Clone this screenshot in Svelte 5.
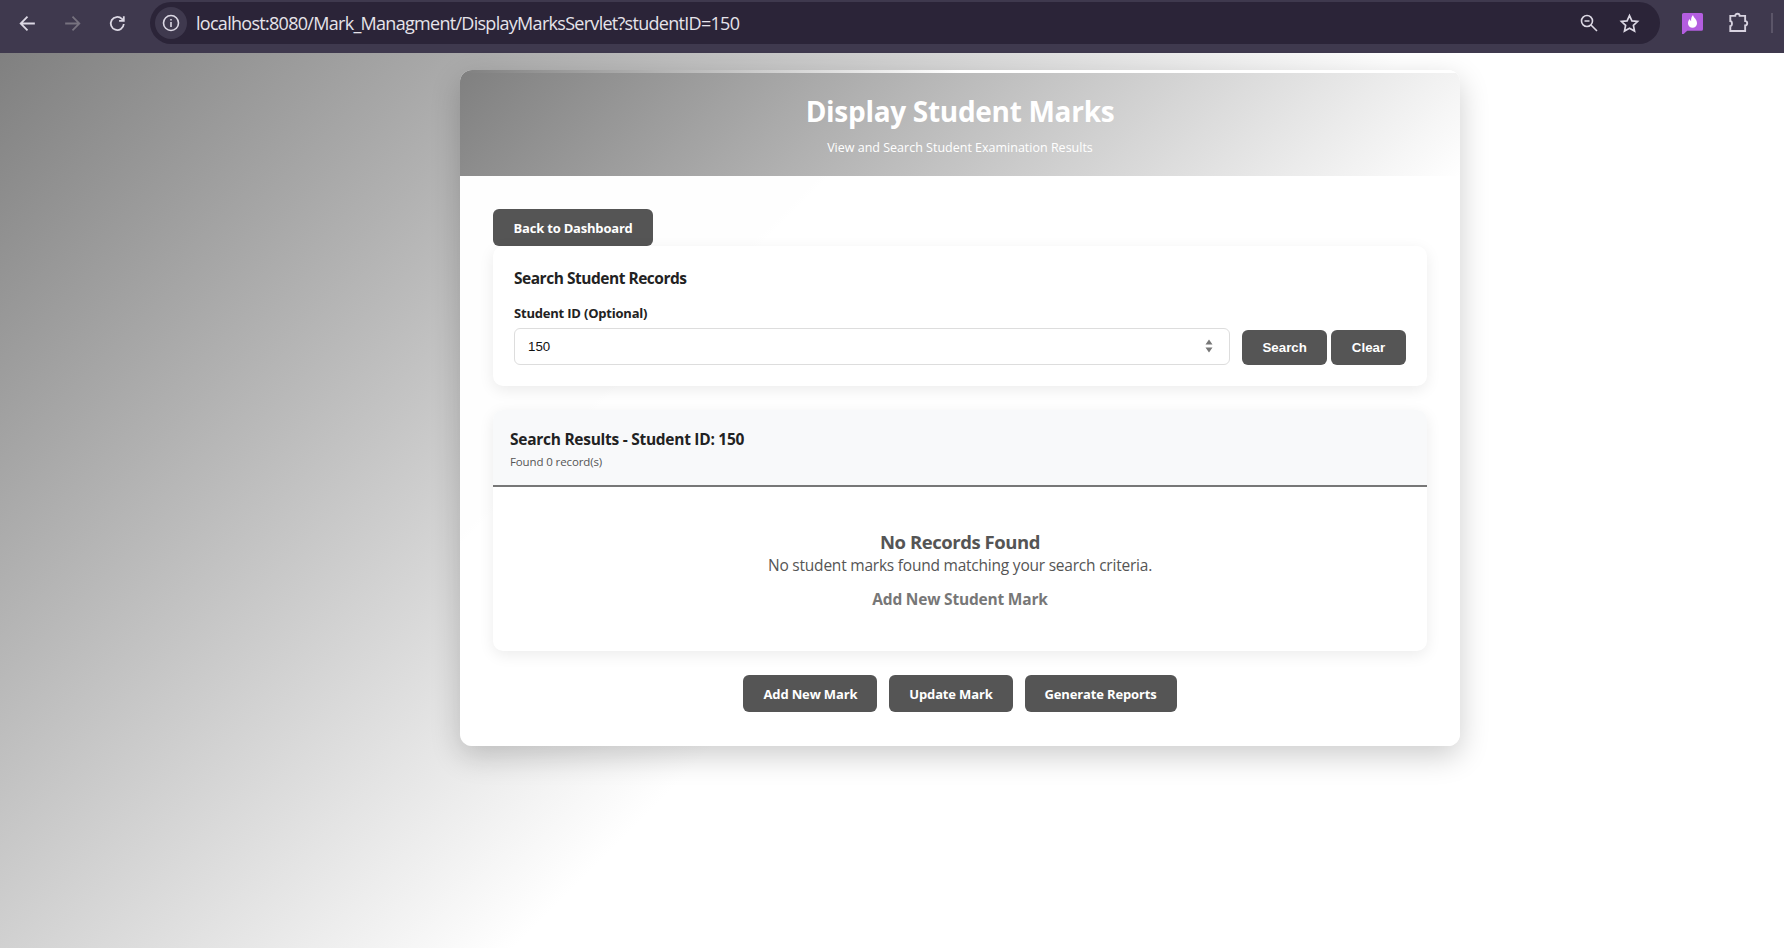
<script lang="ts">
	const actions = ['Add New Mark', 'Update Mark', 'Generate Reports'];
	let studentId = $state('150');
</script>

<div class="shell">
	<header class="toolbar">
		<div class="nav">
			<svg class="nav-icon" viewBox="0 0 20 20"><path d="M17 10H4M10 3.5 3.5 10l6.5 6.5" /></svg>
			<svg class="nav-icon dim" viewBox="0 0 20 20"><path d="M3 10h13M10 3.5l6.5 6.5-6.5 6.500" /></svg>
			<svg class="nav-icon" viewBox="0 0 20 20"><path d="M16 10.500A6.200 6.200 0 1 1 14.200 5.600L16 7.400M16 3v4.500h-4.500" /></svg>
		</div>
		<div class="omnibox">
			<span class="chip">
				<svg viewBox="0 0 20 20" width="20" height="20"><circle cx="10" cy="10" r="7.500" /><path d="M10 9v5M10 6v1.600" /></svg>
			</span>
			<span class="url">localhost:8080/Mark_Managment/DisplayMarksServlet?studentID=150</span>
			<span class="omni-right">
				<svg viewBox="0 0 20 20" width="20" height="20"><circle cx="8" cy="8" r="5.500" /><path d="M5.500 8h5M12 12l6 6" /></svg>
				<svg viewBox="0 0 20 20" width="21" height="21"><path d="m10 2.500 2.300 5 5.400.6-4 3.700 1.100 5.400L10 14.500l-4.800 2.700 1.100-5.400-4-3.700 5.400-.6z" /></svg>
			</span>
		</div>
		<div class="ext">
			<svg viewBox="0 0 20 20" width="21" height="21"><path class="flame-box" d="M1.500 0h17A1.500 1.500 0 0 1 20 1.500v14a1.500 1.500 0 0 1-1.500 1.500H5l-4 3.500H0V1.500A1.500 1.500 0 0 1 1.500 0z" /><path class="flame" d="M10.500 2c.3 2.500 3.800 4 3.800 7.800a4.300 4.300 0 0 1-8.600 0c0-1.800.8-3.100 1.800-4 .1 1.100.6 1.700 1.200 2-.3-2 .4-4.300 1.800-5.800z" /></svg>
			<svg viewBox="0 0 20 20" width="22" height="22"><path d="M7.500 3.500c0-2.500 4-2.500 4 0h5v4.800c2.500 0 2.500 4 0 4v5H3v-4.500c2 0 2-4.500 0-4.500V3.500z" /></svg>
			<span class="divider"></span>
		</div>
	</header>

	<main class="page">
		<div class="card">
			<div class="card-head">
				<h1>Display Student Marks</h1>
				<p>View and Search Student Examination Results</p>
			</div>
			<div class="card-body">
				<button class="btn back">Back to Dashboard</button>

				<section class="search">
					<h3>Search Student Records</h3>
					<label for="sid">Student ID (Optional)</label>
					<div class="search-row">
						<div class="field">
							<input id="sid" type="number" bind:value={studentId} />
							<svg class="spin" viewBox="0 0 8 14" width="8" height="14"><path d="M4 0.500 7.500 5.500h-7zM4 13.500 0.500 8.500h7z" /></svg>
						</div>
						<button class="btn form-btn search-btn">Search</button>
						<button class="btn form-btn">Clear</button>
					</div>
				</section>

				<section class="results">
					<div class="results-head">
						<h3>Search Results - Student ID: 150</h3>
						<small>Found 0 record(s)</small>
					</div>
					<div class="empty">
						<h4>No Records Found</h4>
						<p>No student marks found matching your search criteria.</p>
						<a href="#add">Add New Student Mark</a>
					</div>
				</section>

				<div class="actions">
					{#each actions as action (action)}
						<button class="btn">{action}</button>
					{/each}
				</div>
			</div>
		</div>
	</main>
</div>

<style>
	:global(body) {
		overflow: hidden;
		background: #fff;
	}

	.shell {
		width: 1784px;
		height: 948px;
		overflow: hidden;
		font-family: "Open Sans", "Noto Sans", sans-serif;
	}

	.toolbar {
		height: 53px;
		box-sizing: border-box;
		display: flex;
		align-items: center;
		background: #3f394e;
		padding: 0 0 7px 17px;
	}

	.nav {
		display: flex;
		gap: 24px;
		width: 133px;
		flex-shrink: 0;
		padding-top: 1px;
	}

	.nav-icon {
		width: 21px;
		height: 21px;
		fill: none;
		stroke: #dcd8e4;
		stroke-width: 1.7;
	}

	.nav-icon.dim {
		stroke: #77727f;
	}

	.omnibox {
		width: 1510px;
		height: 42px;
		flex-shrink: 0;
		display: flex;
		align-items: center;
		background: #2b2438;
		border-radius: 21px;
		padding: 0 5px;
		box-sizing: border-box;
		color: #e6e3ea;
	}

	.chip {
		width: 32px;
		height: 32px;
		border-radius: 50%;
		background: #3f394e;
		display: flex;
		align-items: center;
		justify-content: center;
		flex-shrink: 0;
	}

	.omnibox svg {
		fill: none;
		stroke: #dcd8e4;
		stroke-width: 1.6;
	}

	.url {
		margin-left: 9px;
		font-size: 18px;
		letter-spacing: -0.71px;
		white-space: nowrap;
	}

	.omni-right {
		margin-left: auto;
		display: flex;
		align-items: center;
		gap: 20px;
		padding-right: 15px;
	}

	.ext {
		display: flex;
		align-items: center;
		gap: 24px;
		padding-left: 22px;
	}

	.ext svg {
		fill: none;
		stroke: #d8d3e0;
		stroke-width: 1.7;
	}

	.ext .flame-box {
		fill: #b45ee0;
		stroke: none;
	}

	.ext .flame {
		fill: #fff;
		stroke: none;
	}

	.divider {
		width: 2px;
		height: 20px;
		background: #5b5568;
		margin-left: -2px;
	}

	.page {
		height: 895px;
		box-sizing: border-box;
		padding: 17px 0 0 460px;
		background: linear-gradient(135deg, #808080 0%, #fff 50%) 0 0 / 1920px 895px no-repeat;
	}

	.card {
		width: 1000px;
		background: rgba(255, 255, 255, 0.98);
		border-radius: 12px;
		box-shadow: 0 10px 30px rgba(0, 0, 0, 0.2);
		overflow: hidden;
	}

	.card::before {
		content: '';
		display: block;
		height: 3px;
		background: linear-gradient(90deg, #808080, #fff 50%);
	}

	.card-head {
		height: 103px;
		box-sizing: border-box;
		padding-top: 21px;
		text-align: center;
		color: #fff;
		background: linear-gradient(135deg, #808080, #fff);
	}

	h1 {
		margin: 0;
		font-size: 28px;
		line-height: 34px;
		font-weight: 700;
		letter-spacing: -0.3px;
	}

	.card-head p {
		margin: 11px 0 0;
		font-size: 12.500px;
		line-height: 18px;
	}

	.card-body {
		padding: 33px 33px 34px;
	}

	.btn {
		border: 0;
		border-radius: 6px;
		background: #555;
		color: #fff;
		font-family: inherit;
		font-size: 13px;
		font-weight: 700;
		letter-spacing: -0.15px;
		height: 37px;
		padding: 0 20px;
	}

	.back {
		display: block;
		letter-spacing: -0.2px;
		padding: 0 20.500px;
	}

	.search {
		height: 140px;
		box-sizing: border-box;
		padding: 22px 21px 0;
		background: #fff;
		border-radius: 10px;
		box-shadow: 0 4px 15px rgba(0, 0, 0, 0.08);
	}

	h3 {
		margin: 0;
		font-size: 15.500px;
		line-height: 20px;
		font-weight: 700;
		letter-spacing: -0.48px;
		color: #222;
	}

	label {
		display: block;
		margin-top: 17px;
		font-size: 13px;
		line-height: 16px;
		font-weight: 700;
		letter-spacing: -0.2px;
		color: #222;
	}

	.search-row {
		display: flex;
		align-items: flex-end;
		gap: 4px;
		margin-top: 7px;
	}

	.field {
		position: relative;
		width: 716px;
		margin-right: 8px;
	}

	input {
		display: block;
		width: 100%;
		height: 37px;
		box-sizing: border-box;
		padding: 0 13px;
		border: 1px solid #ddd;
		border-radius: 6px;
		background: #fff;
		color: #111;
		font-family: "Liberation Sans", Arial, sans-serif;
		font-size: 13.300px;
		outline: none;
		appearance: textfield;
	}

	input::-webkit-inner-spin-button,
	input::-webkit-outer-spin-button {
		appearance: none;
		margin: 0;
	}

	.spin {
		position: absolute;
		right: 17px;
		top: 11px;
		fill: #777;
	}

	.form-btn {
		height: 35px;
		font-family: "Liberation Sans", Arial, sans-serif;
		font-size: 13.300px;
		letter-spacing: 0;
		padding: 0 20.500px;
	}

	.results {
		margin-top: 24px;
		background: #fff;
		border-radius: 10px;
		box-shadow: 0 4px 15px rgba(0, 0, 0, 0.08);
		overflow: hidden;
	}

	.results-head {
		height: 77px;
		box-sizing: border-box;
		padding: 19px 17px 0;
		background: #f8f9fa;
		border-bottom: 2px solid #777;
	}

	.results-head h3 {
		letter-spacing: -0.27px;
	}

	.results-head small {
		display: block;
		margin-top: 5px;
		font-size: 11.500px;
		line-height: 15px;
		letter-spacing: -0.12px;
		color: #555;
	}

	.empty {
		height: 164px;
		box-sizing: border-box;
		padding-top: 43px;
		text-align: center;
		color: #555;
	}

	h4 {
		margin: 0;
		font-size: 18.500px;
		line-height: 24px;
		font-weight: 700;
		letter-spacing: -0.45px;
	}

	.empty p {
		margin: 1px 0 0;
		font-size: 15.500px;
		line-height: 20px;
		letter-spacing: -0.22px;
	}

	.empty a {
		display: block;
		margin-top: 14px;
		font-size: 15.500px;
		line-height: 20px;
		font-weight: 700;
		letter-spacing: -0.2px;
		color: #777;
		text-decoration: none;
	}

	.actions {
		display: flex;
		justify-content: center;
		gap: 12px;
		margin-top: 24px;
	}
</style>
